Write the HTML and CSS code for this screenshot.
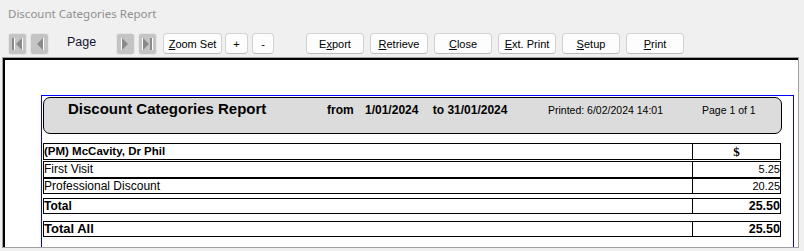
FILE: index.html
```html
<!DOCTYPE html>
<html lang="en">
  <head>
    <meta charset="UTF-8" />
    <meta name="viewport" content="width=device-width, initial-scale=1.0" />
    <title>Discount Categories Report</title>
    <link rel="stylesheet" href="styles.css">
  </head>

  <body>
    <div class="window">
      <div class="titlebar">Discount Categories Report</div>

      <div class="toolbar">
        <span class="nav">
          <svg width="17" height="20" viewBox="0 0 17 20">
            <rect x="3" y="4" width="2" height="12" fill="#8a8a8a" />
            <rect x="5" y="4" width="1" height="12" fill="#fff" />
            <polygon points="13,4 7,10 13,16" fill="#8a8a8a" />
            <line x1="13.5" y1="4" x2="13.5" y2="16" stroke="#fff" stroke-width="1" />
          </svg>
        </span>
        <span class="nav nav-gap">
          <svg width="17" height="20" viewBox="0 0 17 20">
            <polygon points="12,4 6,10 12,16" fill="#8a8a8a" />
            <line x1="12.5" y1="4" x2="12.5" y2="16" stroke="#fff" stroke-width="1" />
          </svg>
        </span>
        <span class="page-label">Page</span>
        <span class="nav">
          <svg width="17" height="20" viewBox="0 0 17 20">
            <polygon points="5,4 11,10 5,16" fill="#8a8a8a" />
            <line x1="4.5" y1="4" x2="4.5" y2="16" stroke="#fff" stroke-width="1" />
          </svg>
        </span>
        <span class="nav nav-gap">
          <svg width="17" height="20" viewBox="0 0 17 20">
            <polygon points="4,4 10,10 4,16" fill="#8a8a8a" />
            <line x1="3.5" y1="4" x2="3.5" y2="16" stroke="#fff" stroke-width="1" />
            <rect x="11" y="4" width="2" height="12" fill="#8a8a8a" />
            <rect x="13" y="4" width="1" height="12" fill="#fff" />
          </svg>
        </span>

        <button class="btn zoom"><u>Z</u>oom Set</button>
        <button class="btn plus">+</button>
        <button class="btn minus">-</button>

        <button class="btn action first-action">E<u>x</u>port</button>
        <button class="btn action"><u>R</u>etrieve</button>
        <button class="btn action"><u>C</u>lose</button>
        <button class="btn action"><u>E</u>xt. Print</button>
        <button class="btn action"><u>S</u>etup</button>
        <button class="btn action"><u>P</u>rint</button>
      </div>

      <div class="viewer">
        <div class="sheet">
          <div class="page">
            <div class="report-head">
              <span class="head-title">Discount Categories Report</span>
              <span class="head-range">
                <span>from</span>
                <span class="date-from">1/01/2024</span>
                <span class="date-to">to 31/01/2024</span>
              </span>
              <span class="head-printed">Printed: 6/02/2024 14:01</span>
              <span class="head-page">Page 1 of 1</span>
            </div>

            <div class="row row-group">
              <div class="cell name">(PM) McCavity, Dr Phil</div>
              <div class="cell money dollar">$</div>
            </div>
            <div class="row row-item row-first">
              <div class="cell name">First Visit</div>
              <div class="cell money">5.25</div>
            </div>
            <div class="row row-item row-short">
              <div class="cell name">Professional Discount</div>
              <div class="cell money">20.25</div>
            </div>
            <div class="row row-total row-short">
              <div class="cell name">Total</div>
              <div class="cell money">25.50</div>
            </div>
            <div class="row row-grand row-short">
              <div class="cell name">Total All</div>
              <div class="cell money">25.50</div>
            </div>
          </div>
        </div>
      </div>
    </div>
  </body>
</html>
```

FILE: styles.css
```css
* {
  margin: 0;
  padding: 0;
  box-sizing: border-box;
}

body {
  width: 804px;
  height: 251px;
  overflow: hidden;
  background: #f0f0f0;
  font-family: "Liberation Sans", Arial, sans-serif;
}

.window {
  height: 251px;
  display: flex;
  flex-direction: column;
}

.titlebar {
  flex-shrink: 0;
  height: 30px;
  padding: 6px 0 0 8px;
  font-family: "Noto Sans", "Liberation Sans", sans-serif;
  font-size: 11.5px;
  line-height: 16px;
  color: #8f8f8f;
}

/* toolbar */

.toolbar {
  flex-shrink: 0;
  display: flex;
  align-items: center;
  padding: 3px 0 0 9px;
  height: 24px;
}

.nav {
  width: 17px;
  height: 20px;
  background: #c4c4c4;
  border-radius: 2px;
  box-shadow: 0 0 0 1px #e6e6e6;
}

.nav svg {
  display: block;
}

.nav-gap {
  margin-left: 5px;
}

.page-label {
  width: 69px;
  padding-left: 19px;
  font-size: 12.5px;
  color: #14142e;
  margin-top: -4px;
}

.btn {
  height: 21px;
  font-family: "Liberation Sans", Arial, sans-serif;
  font-size: 11px;
  color: #000;
  background: #fdfdfd;
  border: 1px solid #d2d2d2;
  border-bottom-color: #bdbdbd;
  border-radius: 4px;
}

.zoom {
  width: 59px;
  margin-left: 7px;
}

.plus {
  width: 23px;
  margin-left: 3px;
}

.minus {
  width: 22px;
  margin-left: 4px;
}

.action {
  width: 58px;
  margin-left: 6px;
}

.first-action {
  margin-left: 32px;
}

/* report viewer */

.viewer {
  flex: 1;
  min-height: 0;
  margin: 3px 5px 3px 2px;
  border: 1px solid #a0a0a0;
  display: flex;
}

.sheet {
  flex: 1;
  min-height: 0;
  background: #fff;
  border-top: 2px solid #000;
  border-left: 2px solid #000;
  overflow: hidden;
}

.page {
  height: 152px;
  margin: 35px 4px 0 36px;
  padding: 1px 0 0 1px;
  border: 1px solid #0000ff;
  border-bottom: none;
}

.report-head {
  width: 739px;
  height: 37px;
  display: flex;
  align-items: baseline;
  padding-top: 2px;
  background: #dcdcdc;
  border: 1px solid #000;
  border-radius: 7px;
  color: #000;
  white-space: nowrap;
}

.head-title {
  flex: 0 0 283px;
  padding-left: 24px;
  font-size: 15px;
  font-weight: bold;
}

.head-range {
  flex: 0 0 221px;
  font-size: 12px;
  font-weight: bold;
}

.date-from {
  margin-left: 8px;
}

.date-to {
  margin-left: 11px;
}

.head-printed {
  flex: 0 0 154px;
  font-size: 10.5px;
}

.head-page {
  font-size: 10.5px;
}

.row {
  width: 738px;
  display: grid;
  grid-template-columns: 648px 88px;
  border: 1px solid #000;
  height: 17px;
  line-height: 15px;
  color: #000;
}

.row-short {
  height: 16px;
  line-height: 14px;
}

.row-group {
  margin-top: 9px;
  font-size: 11.5px;
  font-weight: bold;
}

.row-first {
  margin-top: 1px;
}

.row-item {
  font-size: 12px;
}

.row-total {
  margin-top: 4px;
  font-size: 12px;
  font-weight: bold;
}

.row-grand {
  margin-top: 7px;
  font-size: 13px;
  font-weight: bold;
}

.cell {
  white-space: nowrap;
  overflow: hidden;
}

.money {
  border-left: 1px solid #000;
  text-align: right;
}

.row-item .money {
  font-size: 11px;
}

.row-total .money,
.row-grand .money {
  font-size: 12.5px;
}

.dollar {
  text-align: center;
  font-family: "Liberation Serif", "Times New Roman", serif;
  font-size: 13px;
}
```
